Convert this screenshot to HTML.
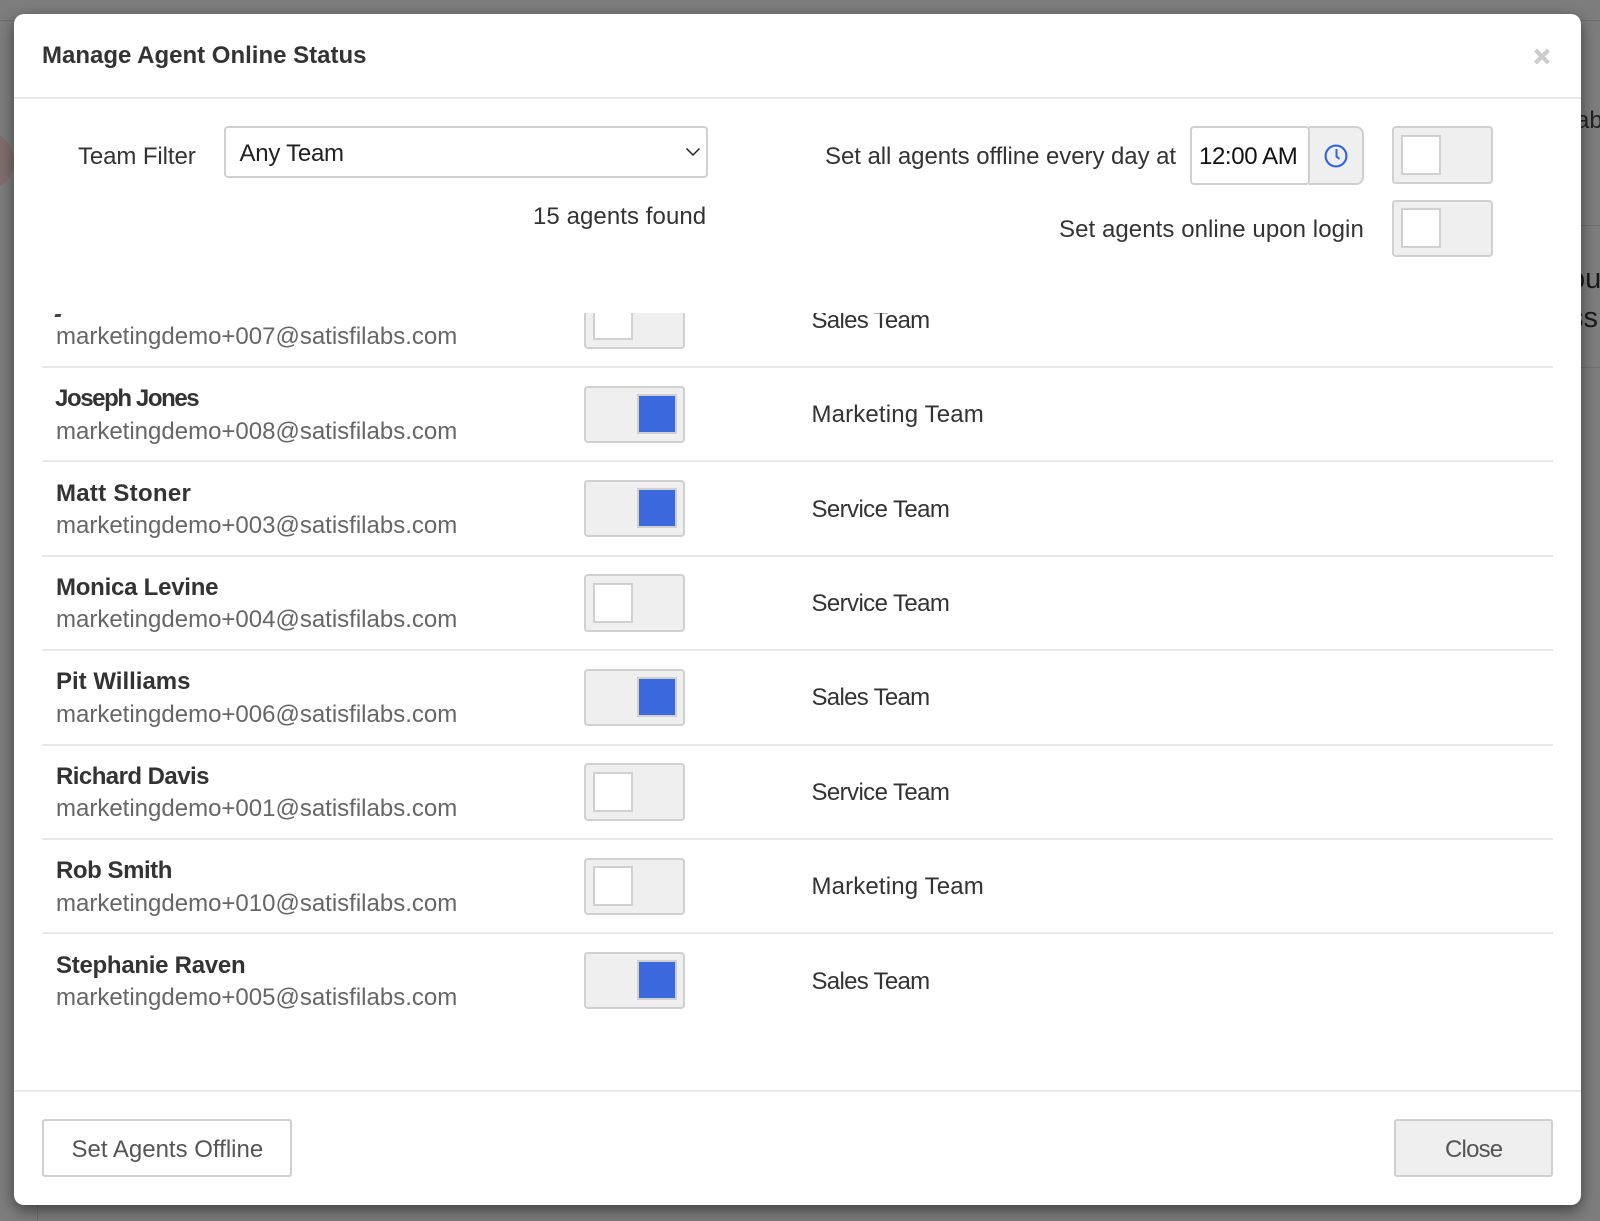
<!DOCTYPE html>
<html lang="en">
<head>
<meta charset="utf-8">
<title>Manage Agent Online Status</title>
<style>
html,body{margin:0;padding:0;width:1600px;height:1221px;overflow:hidden;background:#7d7d7d;font-family:"Liberation Sans",Arial,sans-serif;font-size:24px;color:#333}
.bg{position:absolute;background:#707070}
.t{position:absolute;white-space:nowrap;line-height:30px;height:30px}
#modal{position:absolute;left:14px;top:14px;width:1567px;height:1191px;background:#fff;border-radius:10px;box-shadow:0 5px 15px rgba(0,0,0,.5)}
.abs{position:absolute}
.hr{position:absolute;height:2px;background:#e8e8e8}
.tg{position:absolute;box-sizing:border-box;width:100.5px;height:57.5px;background:#efefef;border:2px solid #d0d0d0;border-radius:4px}
.tg i{position:absolute;box-sizing:border-box;top:6.5px;left:6.5px;width:40px;height:40px;background:#fff;border:2px solid #d0d0d0}
.tg.on i{left:50.5px;background:#3b68dd}
.n{font-weight:bold;color:#333}
.e{color:#666}
#list{position:absolute;left:0;top:313px;width:1600px;height:780px;overflow:hidden}
.row{position:absolute;left:0;width:1600px;height:94.4px}
.row .n{left:56px;top:17.2px}
.row .e{left:56px;top:49.7px}
.row .tg{left:584px;top:18.5px}
.row .m{left:811.5px;top:33.3px;color:#333}
.row .hr{left:42px;width:1511px;top:93.4px}
.sv{letter-spacing:-.6px}
.sl{letter-spacing:-.7px}
.mk{letter-spacing:.15px}
</style>
</head>
<body>
<div class="bg" style="left:0;top:20px;width:1600px;height:1px"></div>
<div class="bg" style="left:1581px;top:225px;width:19px;height:1px"></div>
<div class="bg" style="left:1581px;top:367px;width:19px;height:1px"></div>
<div class="bg" style="left:37px;top:1205px;width:1px;height:16px"></div>
<div class="abs" style="left:-46px;top:131px;width:60px;height:60px;border-radius:50%;background:#7f6e6c"></div>
<div class="t" style="left:1576px;top:106px;color:#222">ab</div>
<div class="t" style="left:1569px;top:264px;color:#1a1a1a;font-size:29px">ou</div>
<div class="t" style="left:1569px;top:303px;color:#1a1a1a;font-size:29px">ss</div>

<div id="modal"></div>
<div class="t" style="left:42px;top:40.7px;font-weight:bold;color:#333">Manage Agent Online Status</div>
<svg class="abs" style="left:1533px;top:48px" width="18" height="18" viewBox="0 0 18 18"><path d="M2.5 2L15.5 15M15.5 2L2.5 15" stroke="#ccc" stroke-width="4.2" fill="none"/></svg>
<div class="hr" style="left:14px;top:97px;width:1567px"></div>

<div class="t" style="left:78px;top:141.7px;letter-spacing:-.1px">Team Filter</div>
<div class="abs" style="left:224px;top:126px;width:484px;height:51.5px;box-sizing:border-box;border:2px solid #d0d0d0;border-radius:4px;background:#fff"></div>
<div class="t" style="left:239.5px;top:138.7px;color:#222;letter-spacing:-.25px">Any Team</div>
<svg class="abs" style="left:685px;top:147px" width="16" height="10" viewBox="0 0 16 10"><path d="M1.5 1.5L8 8L14.5 1.5" stroke="#222" stroke-width="1.5" fill="none"/></svg>
<div class="t" style="left:533px;top:202.2px;letter-spacing:.07px">15 agents found</div>

<div class="t" style="left:825px;top:141.7px;letter-spacing:-.06px">Set all agents offline every day at</div>
<div class="abs" style="left:1309px;top:126px;width:55px;height:59px;box-sizing:border-box;border:2px solid #d0d0d0;border-left:0;border-radius:0 8px 8px 0;background:#efefef"></div>
<div class="abs" style="left:1190px;top:126px;width:120px;height:59px;box-sizing:border-box;border:2px solid #d0d0d0;border-radius:4px;background:#fff"></div>
<div class="t" style="left:1199px;top:141.7px;color:#111;letter-spacing:-.38px">12:00 AM</div>
<svg class="abs" style="left:1323px;top:143px" width="26" height="26" viewBox="0 0 26 26"><circle cx="13" cy="13" r="10.4" fill="none" stroke="#2f62dc" stroke-width="2.1"/><path d="M13.5 6V13.5L16.5 16" fill="none" stroke="#2f62dc" stroke-width="2"/></svg>
<div class="tg" style="left:1392px;top:126px"><i></i></div>
<div class="t" style="left:1059px;top:215.4px;letter-spacing:.07px">Set agents online upon login</div>
<div class="tg" style="left:1392px;top:199.5px"><i></i></div>

<div id="list">
 <div class="abs" style="left:55px;top:1px;width:6px;height:2.5px;background:#444;transform:skewX(-20deg)"></div>
 <div class="row" style="top:-40.4px"><div class="t e">marketingdemo+007@satisfilabs.com</div><div class="tg"><i></i></div><div class="t m sl">Sales Team</div><div class="hr"></div></div>
 <div class="row" style="top:54px"><div class="t n" style="letter-spacing:-1.4px;left:55px">Joseph Jones</div><div class="t e">marketingdemo+008@satisfilabs.com</div><div class="tg on"><i></i></div><div class="t m mk">Marketing Team</div><div class="hr"></div></div>
 <div class="row" style="top:148.4px"><div class="t n" style="letter-spacing:.28px">Matt Stoner</div><div class="t e">marketingdemo+003@satisfilabs.com</div><div class="tg on"><i></i></div><div class="t m sv">Service Team</div><div class="hr"></div></div>
 <div class="row" style="top:242.8px"><div class="t n" style="letter-spacing:-.24px">Monica Levine</div><div class="t e">marketingdemo+004@satisfilabs.com</div><div class="tg"><i></i></div><div class="t m sv">Service Team</div><div class="hr"></div></div>
 <div class="row" style="top:337.2px"><div class="t n">Pit Williams</div><div class="t e">marketingdemo+006@satisfilabs.com</div><div class="tg on"><i></i></div><div class="t m sl">Sales Team</div><div class="hr"></div></div>
 <div class="row" style="top:431.6px"><div class="t n" style="letter-spacing:-.55px">Richard Davis</div><div class="t e">marketingdemo+001@satisfilabs.com</div><div class="tg"><i></i></div><div class="t m sv">Service Team</div><div class="hr"></div></div>
 <div class="row" style="top:526px"><div class="t n" style="letter-spacing:-.45px">Rob Smith</div><div class="t e">marketingdemo+010@satisfilabs.com</div><div class="tg"><i></i></div><div class="t m mk">Marketing Team</div><div class="hr"></div></div>
 <div class="row" style="top:620.4px"><div class="t n" style="letter-spacing:-.27px">Stephanie Raven</div><div class="t e">marketingdemo+005@satisfilabs.com</div><div class="tg on"><i></i></div><div class="t m sl">Sales Team</div></div>
</div>

<div class="hr" style="left:14px;top:1090px;width:1567px"></div>
<div class="abs" style="left:42px;top:1119px;width:250px;height:58px;box-sizing:border-box;border:2px solid #d0d0d0;border-radius:3px;background:#fff"></div>
<div class="t" style="left:71.5px;top:1134.7px;color:#555">Set Agents Offline</div>
<div class="abs" style="left:1394px;top:1119px;width:158.5px;height:58px;box-sizing:border-box;border:2px solid #d0d0d0;border-radius:3px;background:#efefef"></div>
<div class="t" style="left:1445px;top:1134.7px;color:#555;letter-spacing:-.8px">Close</div>
</body>
</html>
